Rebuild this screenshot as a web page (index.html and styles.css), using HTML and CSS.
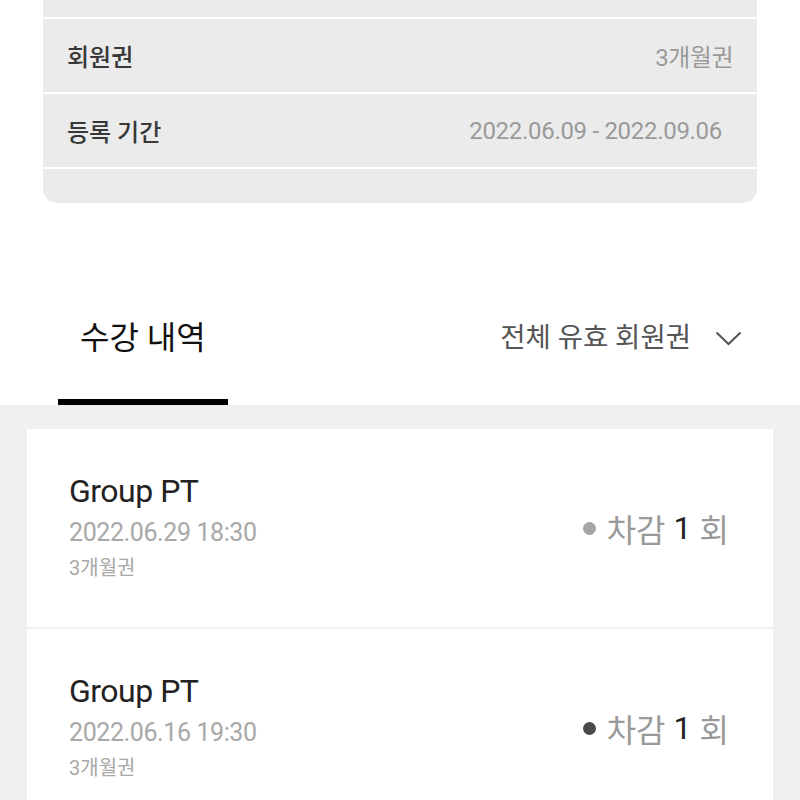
FILE: index.html
```html
<!DOCTYPE html>
<html lang="ko">
<head>
  <meta charset="UTF-8">
  <meta name="viewport" content="width=device-width, initial-scale=1.0">
  <title>수강 내역</title>
  <link rel="stylesheet" href="styles.css">
</head>
<body>

  <!-- Membership info card -->
  <div class="info-card">
    <div class="info-row cut"></div>
    <div class="info-row">
      <span class="info-label">회원권</span>
      <span class="info-value">3개월권</span>
    </div>
    <div class="info-row">
      <span class="info-label">등록 기간</span>
      <span class="info-value dates">2022.06.09 - 2022.09.06</span>
    </div>
    <div class="info-row last"></div>
  </div>

  <!-- History header -->
  <div class="history-head">
    <div class="tab active">수강 내역</div>
    <div class="filter">
      <span>전체 유효 회원권</span>
      <svg class="chevron" width="27" height="15" viewBox="0 0 27 15">
        <polyline points="1.5,1.5 13.5,13 25.5,1.5" fill="none" stroke="#555" stroke-width="2"/>
      </svg>
    </div>
  </div>

  <!-- History list -->
  <div class="history-list">
    <div class="history-item">
      <div class="item-info">
        <div class="item-title">Group PT</div>
        <div class="item-date">2022.06.29 18:30</div>
        <div class="item-pass">3개월권</div>
      </div>
      <div class="item-count">
        <span class="dot light"></span>
        <span>차감</span>
        <strong>1</strong>
        <span>회</span>
      </div>
    </div>
    <div class="history-item">
      <div class="item-info">
        <div class="item-title">Group PT</div>
        <div class="item-date">2022.06.16 19:30</div>
        <div class="item-pass">3개월권</div>
      </div>
      <div class="item-count">
        <span class="dot dark"></span>
        <span>차감</span>
        <strong>1</strong>
        <span>회</span>
      </div>
    </div>
  </div>

</body>
</html>
```

FILE: styles.css
```css
/* General Styles */
body {
  font-family: Roboto, "Noto Sans CJK KR", sans-serif;
  margin: 0;
  padding: 0;
  background-color: #fff;
  color: #222;
  overflow: hidden;
}

/* Info card */
.info-card {
  margin: 0 43px;
  background-color: #ebebeb;
  border-radius: 0 0 14px 14px;
}

.info-row {
  height: 73px;
  border-bottom: 2px solid #fff;
  display: flex;
  justify-content: space-between;
  align-items: center;
  padding: 0 24px;
}

.info-row.cut {
  height: 17px;
}

.info-row.last {
  height: 34px;
  border-bottom: none;
}

.info-label {
  font-size: 24px;
  font-weight: 500;
  color: #383838;
}

.info-value {
  font-size: 24px;
  color: #9a9a9a;
  letter-spacing: -0.5px;
}

.info-value.dates {
  margin-right: 11px;
  letter-spacing: -0.3px;
}

/* History header */
.history-head {
  margin-top: 113px;
  display: flex;
  justify-content: space-between;
  align-items: flex-start;
}

.tab {
  margin-left: 58px;
  padding: 0 22px 39px;
  line-height: 44px;
  font-size: 32px;
  color: #111;
  border-bottom: 6px solid #000;
}

.filter {
  margin-right: 58px;
  display: flex;
  align-items: center;
  gap: 24px;
  line-height: 44px;
  font-size: 27.5px;
  color: #555;
}

/* History list */
.history-list {
  background-color: #f0f0f0;
  padding: 24px 27px 0;
  display: flex;
  flex-direction: column;
  gap: 2px;
}

.history-item {
  background-color: #fff;
  height: 198px;
  display: flex;
  justify-content: space-between;
  align-items: center;
  padding: 0 44px 0 42px;
}

.item-info {
  padding-bottom: 4px;
}

.item-title {
  font-size: 32px;
  line-height: 40px;
  color: #222;
  letter-spacing: -0.5px;
}

.item-date {
  margin-top: 6px;
  font-size: 25px;
  line-height: 32px;
  color: #a8a8a8;
  letter-spacing: -0.4px;
}

.item-pass {
  margin-top: 6px;
  font-size: 20px;
  line-height: 26px;
  color: #a8a8a8;
}

.item-count {
  display: flex;
  align-items: center;
  gap: 8px;
  font-size: 32px;
  color: #999;
}

.item-count strong {
  font-weight: 400;
  color: #222;
}

.dot {
  width: 13px;
  height: 13px;
  border-radius: 50%;
  margin-right: 3px;
}

.dot.light {
  background-color: #a5a5a5;
}

.dot.dark {
  background-color: #4a4a4a;
}
```
